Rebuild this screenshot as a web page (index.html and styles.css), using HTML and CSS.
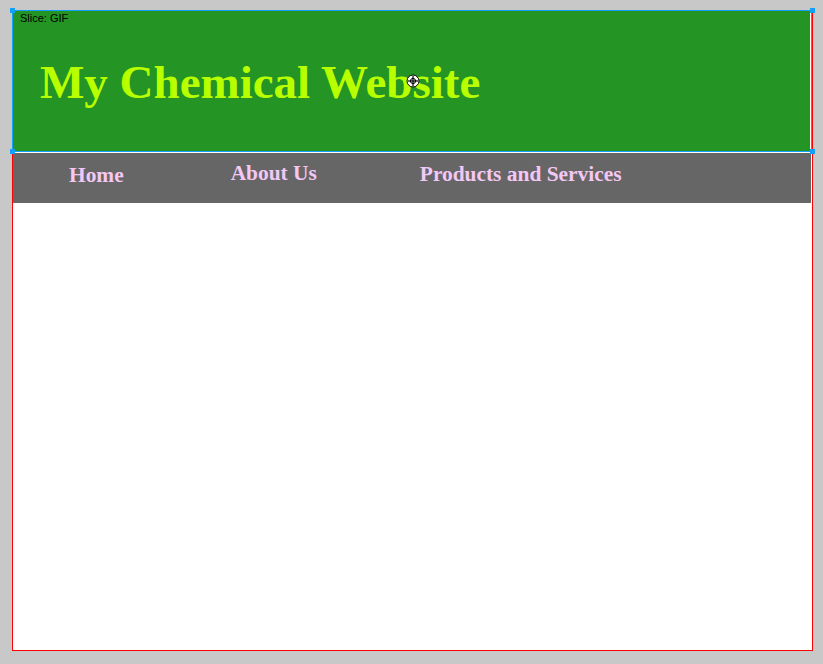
FILE: index.html
```html
<!DOCTYPE html>
<html lang="en">
<head>
  <meta charset="UTF-8" />
  <title>My Chemical Website</title>
  <link rel="stylesheet" href="styles.css">
</head>
<body>
  <div class="canvas">
    <header class="banner">
      <h1>My Chemical Website</h1>
    </header>

    <nav class="menu">
      <a class="menu-home" href="#">Home</a>
      <a class="menu-about" href="#">About Us</a>
      <a class="menu-products" href="#">Products and Services</a>
    </nav>

    <!-- slice overlay from the editor -->
    <div class="slice">
      <span class="slice-label">Slice: GIF</span>
      <span class="handle handle-tl"></span>
      <span class="handle handle-tr"></span>
      <span class="handle handle-bl"></span>
      <span class="handle handle-br"></span>
    </div>

    <svg class="cursor" width="14" height="14" viewBox="0 0 14 14">
      <circle cx="7" cy="7" r="6" fill="#fff" stroke="#000" stroke-width="1"/>
      <line x1="7" y1="2" x2="7" y2="12" stroke="#000" stroke-width="1.2"/>
      <line x1="2" y1="7" x2="12" y2="7" stroke="#000" stroke-width="1.2"/>
      <circle cx="7" cy="7" r="2.6" fill="none" stroke="#000" stroke-width="1"/>
    </svg>
  </div>
</body>
</html>
```

FILE: styles.css
```css
body {
  background: #c8c8c8;
  margin: 0;
  padding: 0;
}

.canvas {
  position: relative;
  box-sizing: border-box;
  width: 801px;
  height: 641px;
  margin: 10px 0 0 12px;
  background: #fff;
  border: 1px solid #ff0000;
}

.banner {
  background: #249524;
  height: 140px;
  margin-right: 2px;
  padding: 44px 0 0 27px;
  box-sizing: border-box;
}

.banner h1 {
  margin: 0;
  font-family: "Palatino Linotype", "Book Antiqua", "Liberation Serif", serif;
  font-size: 47px;
  font-weight: bold;
  color: #b8ff00;
  line-height: normal;
}

.menu {
  display: flex;
  align-items: flex-start;
  height: 50px;
  margin: 2px 1px 0 0;
  padding: 8px 0 0 56px;
  box-sizing: border-box;
  background: #666666;
}

.menu a {
  font-family: "Palatino Linotype", "Book Antiqua", "Liberation Serif", serif;
  font-size: 21.4px;
  font-weight: bold;
  color: #f4c8f4;
  text-decoration: none;
  line-height: normal;
}

.menu-home {
  margin-top: 2px;
}

.menu-about {
  margin-left: 107px;
}

.menu-products {
  margin: 1px 0 0 103px;
}

.slice {
  position: absolute;
  left: -1px;
  top: -1px;
  width: 800px;
  height: 142px;
  box-sizing: border-box;
  border: 1px solid #12a0f8;
}

.slice-label {
  position: absolute;
  left: 7px;
  top: 1px;
  font-family: "Liberation Sans", Arial, sans-serif;
  font-size: 11px;
  color: #000;
}

.handle {
  position: absolute;
  width: 5px;
  height: 5px;
  background: #12a0f8;
}

.handle-tl { left: -3px; top: -3px; }
.handle-tr { right: -4px; top: -3px; }
.handle-bl { left: -3px; bottom: -3px; }
.handle-br { right: -4px; bottom: -3px; }

.cursor {
  position: absolute;
  left: 393px;
  top: 63px;
}
```
